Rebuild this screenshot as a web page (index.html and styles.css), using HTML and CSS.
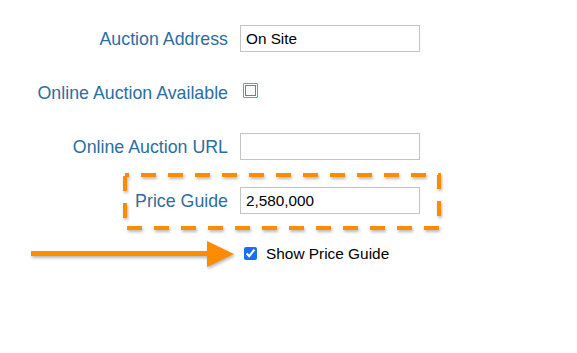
FILE: index.html
```html
<!DOCTYPE html>
<html>
<head>
<meta charset="utf-8">
<link rel="stylesheet" href="styles.css">
</head>
<body>
<div class="page">
  <form class="form">
    <div class="row">
      <label class="label">Auction Address</label>
      <input class="field" type="text" value="On Site">
    </div>
    <div class="row row-2">
      <label class="label">Online Auction Available</label>
      <div><input class="check focus" type="checkbox"></div>
    </div>
    <div class="row row-3">
      <label class="label">Online Auction URL</label>
      <input class="field" type="text" value="">
    </div>
    <div class="row row-4">
      <label class="label">Price Guide</label>
      <input class="field" type="text" value="2,580,000">
    </div>
    <div class="row row-5">
      <span></span>
      <label class="check-label"><input class="check" type="checkbox" checked><span>Show Price Guide</span></label>
    </div>
  </form>

  <svg class="highlight" width="577" height="353" viewBox="0 0 577 353">
    <rect x="125" y="175" width="314" height="53" fill="none" stroke="#ff8c00" stroke-width="4" stroke-dasharray="15 12" stroke-dashoffset="11"/>
  </svg>
  <svg class="arrow" width="577" height="353" viewBox="0 0 577 353">
    <rect x="31" y="251" width="180" height="5" fill="#ff8c00"/>
    <polygon points="207,241 234,254 207,267" fill="#ff8c00"/>
  </svg>
</div>
</body>
</html>
```
FILE: styles.css
```css
html, body {
  margin: 0;
  padding: 0;
  background: #ffffff;
}

.page {
  position: relative;
  width: 577px;
  height: 353px;
  overflow: hidden;
  font-family: "Liberation Sans", Arial, Helvetica, sans-serif;
}

.form {
  display: flex;
  flex-direction: column;
  padding-top: 25px;
  margin: 0;
}

.row {
  display: grid;
  grid-template-columns: 228px 180px;
  column-gap: 12px;
  align-items: center;
  height: 27px;
}

.row-2 { margin-top: 25px; }
.row-3 { margin-top: 29px; }
.row-4 { margin-top: 27px; }
.row-5 { margin-top: 26px; }

.label {
  text-align: right;
  white-space: nowrap;
  color: #2b6e9f;
  font-size: 17.8px;
  line-height: 20px;
}

.row-2 .label {
  position: relative;
  top: 2px;
}

.field {
  box-sizing: border-box;
  width: 180px;
  height: 27px;
  margin: 0;
  padding: 0 5px;
  border: 1px solid #c4c4c4;
  border-radius: 0;
  background: #fff;
  font-family: "Liberation Sans", Arial, Helvetica, sans-serif;
  font-size: 15.3px;
  color: #000;
  outline: none;
}

.check {
  display: block;
  width: 13px;
  height: 13px;
  margin: 3px 3px 3px 4px;
  accent-color: #1a6ff0;
}

.focus {
  appearance: none;
  -webkit-appearance: none;
  box-sizing: border-box;
  width: 15px;
  height: 15px;
  margin: 3px 3px 3px 3px;
  border: 1px solid #4f9fe2;
  border-radius: 1px;
  background: #fafafa;
  box-shadow: inset 0 0 0 1px #ffffff, inset 0 0 0 2px #7d7d7d;
}

.check-label {
  display: flex;
  align-items: center;
  white-space: nowrap;
  font-size: 15.4px;
  color: #000;
}

.check-label span {
  margin-left: 6px;
}

.highlight,
.arrow {
  position: absolute;
  left: 0;
  top: 0;
  pointer-events: none;
  filter: drop-shadow(1px 2px 1.5px rgba(0, 0, 0, 0.28));
}
```
